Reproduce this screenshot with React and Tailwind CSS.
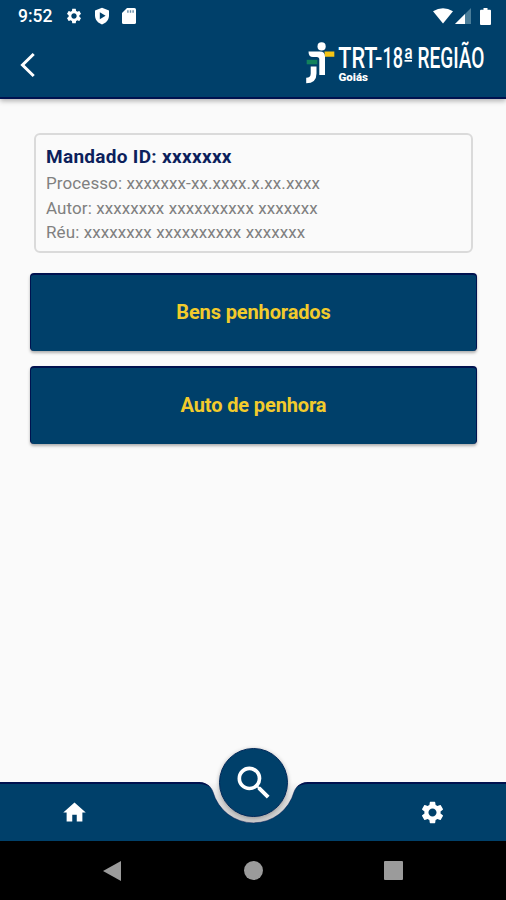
import React from "react";
import { MdHome, MdSearch, MdSettings } from "react-icons/md";

const details = [
  { label: "Processo", value: "xxxxxxx-xx.xxxx.x.xx.xxxx" },
  { label: "Autor", value: "xxxxxxxx xxxxxxxxxx xxxxxxx" },
  { label: "Réu", value: "xxxxxxxx xxxxxxxxxx xxxxxxx" },
];

const actions = ["Bens penhorados", "Auto de penhora"];

const StatusBar = () => (
  <div className="flex h-8 items-center justify-between pl-[18px] pr-[15px]">
    <div className="flex items-center">
      <span className="w-[47px] text-[17.5px] font-medium leading-8">9:52</span>
      <MdSettings size={18} />
      <svg className="ml-[10px]" width="18" height="18" viewBox="0 0 18 18">
        <path fill="#fff" d="M9 .8 16 3.6V8.5C16 12.8 13 16.2 9 17.4 5 16.2 2 12.8 2 8.5V3.6Z" />
        <path fill="#00406a" d="M6.8 5.3 12.6 8.8 6.8 12.3Z" />
      </svg>
      <svg className="ml-[11px]" width="14" height="16" viewBox="0 0 14 16">
        <path fill="#fff" d="M5 0H12.4Q14 0 14 1.6V14.4Q14 16 12.4 16H1.6Q0 16 0 14.4V5Z" />
        <path fill="#00406a" d="M5.2 2.2h1.4v2.6H5.2zM7.8 2.2h1.4v2.6H7.8zM10.4 2.2h1.4v2.6h-1.4z" opacity=".6" />
      </svg>
    </div>
    <div className="flex items-center">
      <svg width="20" height="16" viewBox="0 0 20 16">
        <path fill="#fff" d="M0 3.3Q10-2.9 20 3.3L10 15.6Z" />
      </svg>
      <svg className="ml-[2px]" width="16" height="16" viewBox="0 0 16 16">
        <path fill="#4a7d99" d="M16 0V16H0Z" />
        <path fill="#fff" d="M10 6V16H0Z" />
      </svg>
      <svg className="ml-[9px]" width="11" height="17" viewBox="0 0 11 17">
        <path fill="#fff" d="M3.5 0h4v1.7H10q1 0 1 1V16q0 1-1 1H1q-1 0-1-1V2.7q0-1 1-1h2.5Z" />
      </svg>
    </div>
  </div>
);

const Logo = () => (
  <svg className="overflow-visible" width="190" height="60" viewBox="300 32 190 60" fontFamily="Roboto, sans-serif" fill="#fff">
    {/* figure */}
    <circle cx="321.6" cy="46.4" r="4.1" />
    <path d="M308.5 51.4H320Q325 51.4 325 56.4V75H319.3V59.5Q319.3 57 316.8 57H313Q308.5 57 308.5 51.4Z" />
    <path d="M310.7 66.5H316.5V73.5Q316.5 83.3 306.2 83.3V77.8Q310.7 77.8 310.7 73.5Z" />
    <path fill="#f6c515" d="M324.5 51.4H334.3V56.7H325Z" />
    <path fill="#12825c" d="M306.7 59.8H317.3V64.3H306.7Z" />
    {/* name */}
    <g fontSize="29.5" fontWeight="500">
      <text x="338.3" y="68.3" textLength="44" lengthAdjust="spacingAndGlyphs">TRT-</text>
      <text x="382.5" y="68.3" textLength="20.5" lengthAdjust="spacingAndGlyphs">18</text>
      <text x="403.5" y="67.5" fontSize="28" textLength="9.8" lengthAdjust="spacingAndGlyphs">ª</text>
      <text x="417.5" y="68.3" textLength="67" lengthAdjust="spacingAndGlyphs">REGIÃO</text>
    </g>
    <path d="M404.5 60H412V61.7H404.5Z" />
    <text x="338.5" y="81.3" fontSize="11" fontWeight="900" textLength="29.5" lengthAdjust="spacingAndGlyphs">Goiás</text>
  </svg>
);

const Header = () => (
  <header className="z-10 h-[99px] border-b-2 border-[#00124f] bg-[#00406a] text-white shadow-[0_2px_5px_rgba(0,0,0,0.3)]">
    <StatusBar />
    <div className="flex h-[65px] items-center justify-between pl-[19px] pr-4">
      <button className="flex">
        <svg width="17" height="26" viewBox="0 0 17 26" fill="none" stroke="#fff" strokeWidth="3">
          <path d="M14.7 2 3.5 13 14.7 24" />
        </svg>
      </button>
      <div className="-my-1 mb-[1px]">
        <Logo />
      </div>
    </div>
  </header>
);

const BottomNav = () => (
  <nav className="relative flex h-[59px] text-white">
    <div className="flex w-[193px] border-t-2 border-[#00124f] bg-[#00406a] pl-[61px] pt-[15px]">
      <MdHome size={27} />
    </div>
    <svg width="120" height="59" viewBox="0 0 120 59">
      <defs>
        <linearGradient id="notch" x1="0" y1="0" x2="0" y2="1">
          <stop offset="0" stopColor="#fafafa" />
          <stop offset="0.4" stopColor="#dedede" />
          <stop offset="1" stopColor="#c8c8c8" />
        </linearGradient>
      </defs>
      <path fill="url(#notch)" d="M0 0H120V42H0Z" />
      <path
        fill="#00406a"
        d="M0 1H5C13 1 18 4 20 10A42 42 0 0 0 101 10C103 4 108 1 116 1H120V59H0Z"
      />
      <path
        fill="none"
        stroke="#00124f"
        strokeWidth="0.8"
        strokeOpacity="0.6"
        d="M5 1C13 1 18 4 20 10A42 42 0 0 0 101 10C103 4 108 1 116 1"
      />
      <path fill="#00124f" d="M0 0H6C11 0 15 2 18 5.500Q13 2 6 2H0ZM120 0H115C110 0 106 2 103 5.500Q108 2 115 2H120Z" />
    </svg>
    <div className="flex flex-1 justify-end border-t-2 border-[#00124f] bg-[#00406a] pr-[60px] pt-[15px]">
      <MdSettings size={27} />
    </div>
    <button className="absolute -top-[34px] left-[219px] flex size-[69px] items-center justify-center rounded-full border border-[#00285a] bg-[#00406a] shadow-[0_1px_4px_rgba(0,0,0,0.3)]">
      <MdSearch size={44} />
    </button>
  </nav>
);

const App = () => {
  return (
    <div className="flex h-[900px] w-[506px] flex-col overflow-hidden bg-[#fafafa] font-['Roboto',sans-serif]">
      <Header />

      <main className="flex-1 pl-[30px] pr-[29px] pt-[34px]">
        <section className="mx-[4px] h-[120px] rounded-md border-2 border-[#dadada] px-[10px] pt-[9px]">
          <h1 className="mb-[2px] text-[19px] font-bold leading-[25px] tracking-[0.3px] text-[#0c1f5c]">
            Mandado ID: xxxxxxx
          </h1>
          {details.map((item) => (
            <p key={item.label} className="text-[17px] leading-[24.5px] tracking-[0.09px] text-[#808080]">
              {item.label}: {item.value}
            </p>
          ))}
        </section>

        <div className="mt-[20px] flex flex-col gap-[15px]">
          {actions.map((label) => (
            <button
              key={label}
              className="h-[78px] rounded border border-b-0 border-t-2 border-[#00124f] bg-[#00406a] pb-[3px] text-[20px] font-bold tracking-[-0.13px] text-[#f2cb2c] shadow-[0_2px_3px_rgba(0,0,0,0.3)]"
            >
              {label}
            </button>
          ))}
        </div>
      </main>

      <BottomNav />

      {/* Android buttons */}
      <div className="flex h-[59px] items-center bg-black">
        <svg className="ml-[103px]" width="19" height="22" viewBox="0 0 19 22">
          <path fill="#9b9b9b" d="M18 1V21L0 11Z" />
        </svg>
        <div className="ml-[122px] size-[19px] rounded-full bg-[#9b9b9b]" />
        <div className="ml-[121px] size-[19px] rounded-[1px] bg-[#9b9b9b]" />
      </div>
    </div>
  );
};

export default App;
